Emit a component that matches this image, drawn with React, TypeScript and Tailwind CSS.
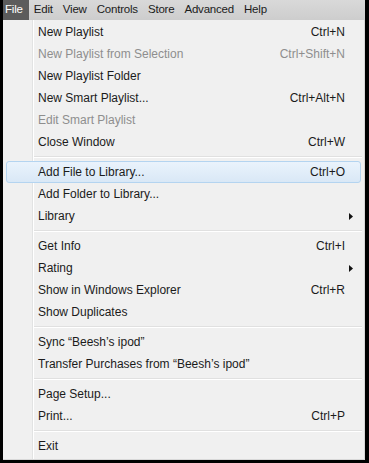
type Item =
  | { sep: true }
  | { sep?: false; label: string; shortcut?: string; disabled?: boolean; sub?: boolean; active?: boolean };

const menuBar = ["File", "Edit", "View", "Controls", "Store", "Advanced", "Help"];

const items: Item[] = [
  { label: "New Playlist", shortcut: "Ctrl+N" },
  { label: "New Playlist from Selection", shortcut: "Ctrl+Shift+N", disabled: true },
  { label: "New Playlist Folder" },
  { label: "New Smart Playlist...", shortcut: "Ctrl+Alt+N" },
  { label: "Edit Smart Playlist", disabled: true },
  { label: "Close Window", shortcut: "Ctrl+W" },
  { sep: true },
  { label: "Add File to Library...", shortcut: "Ctrl+O", active: true },
  { label: "Add Folder to Library..." },
  { label: "Library", sub: true },
  { sep: true },
  { label: "Get Info", shortcut: "Ctrl+I" },
  { label: "Rating", sub: true },
  { label: "Show in Windows Explorer", shortcut: "Ctrl+R" },
  { label: "Show Duplicates" },
  { sep: true },
  { label: "Sync \u201cBeesh\u2019s ipod\u201d" },
  { label: "Transfer Purchases from \u201cBeesh\u2019s ipod\u201d" },
  { sep: true },
  { label: "Page Setup..." },
  { label: "Print...", shortcut: "Ctrl+P" },
  { sep: true },
  { label: "Exit" },
];

export default function App() {
  return (
    <div
      className="w-[369px] h-[463px] bg-black pl-[3px] pr-[4px] pb-[3px] flex flex-col text-[12px] text-[#1b1b1b]"
      style={{ fontFamily: '"Liberation Sans", Arial, sans-serif' }}
    >
      {/* Menu bar */}
      <div className="h-[20px] flex items-stretch bg-gradient-to-b from-[#d9d9d9] to-[#cdcdcd] text-[11.5px] tracking-[-0.2px]">
        {menuBar.map((m, i) => (
          <div
            key={m}
            className={`flex items-center whitespace-nowrap ${
              i === 0 ? "bg-[#5c5c5c] text-white pl-[2px] pr-[6px]" : "px-[5px]"
            }`}
          >
            {m}
          </div>
        ))}
      </div>

      {/* Drop-down */}
      <div className="relative flex-1 bg-[#f0f0f0] border-r border-b border-[#d8d8d8] pt-[1px]">
        <div className="absolute top-0 bottom-0 left-[29px] w-[1px] bg-[#e2e3e3]" />
        <div className="absolute top-0 bottom-0 left-[30px] w-[1px] bg-white" />
        <div className="relative flex flex-col">
          {items.map((it, i) =>
            it.sep ? (
              <div key={i} className="h-[8px] flex flex-col justify-center pl-[31px] pr-[2px]">
                <div className="h-[1px] bg-[#e0e0e0]" />
                <div className="h-[1px] bg-white" />
              </div>
            ) : (
              <div key={i} className="h-[22px] px-[3px]">
                <div
                  className={`h-full flex items-center pl-[31px] pr-[15px] rounded-[3px] border ${
                    it.active
                      ? "border-[#b4d4f0] bg-gradient-to-b from-[#eaf3fc] to-[#d9e8f6]"
                      : "border-transparent"
                  } ${it.disabled ? "text-[#8e8e8e]" : ""}`}
                >
                  <span className="flex-1 whitespace-nowrap">{it.label}</span>
                  {it.shortcut && <span className="whitespace-nowrap">{it.shortcut}</span>}
                  {it.sub && (
                    <svg width="4" height="7" viewBox="0 0 4 7" className="mr-[-8px]">
                      <path d="M0 0 L4 3.5 L0 7 Z" fill="#111" />
                    </svg>
                  )}
                </div>
              </div>
            )
          )}
        </div>
      </div>
    </div>
  );
}
